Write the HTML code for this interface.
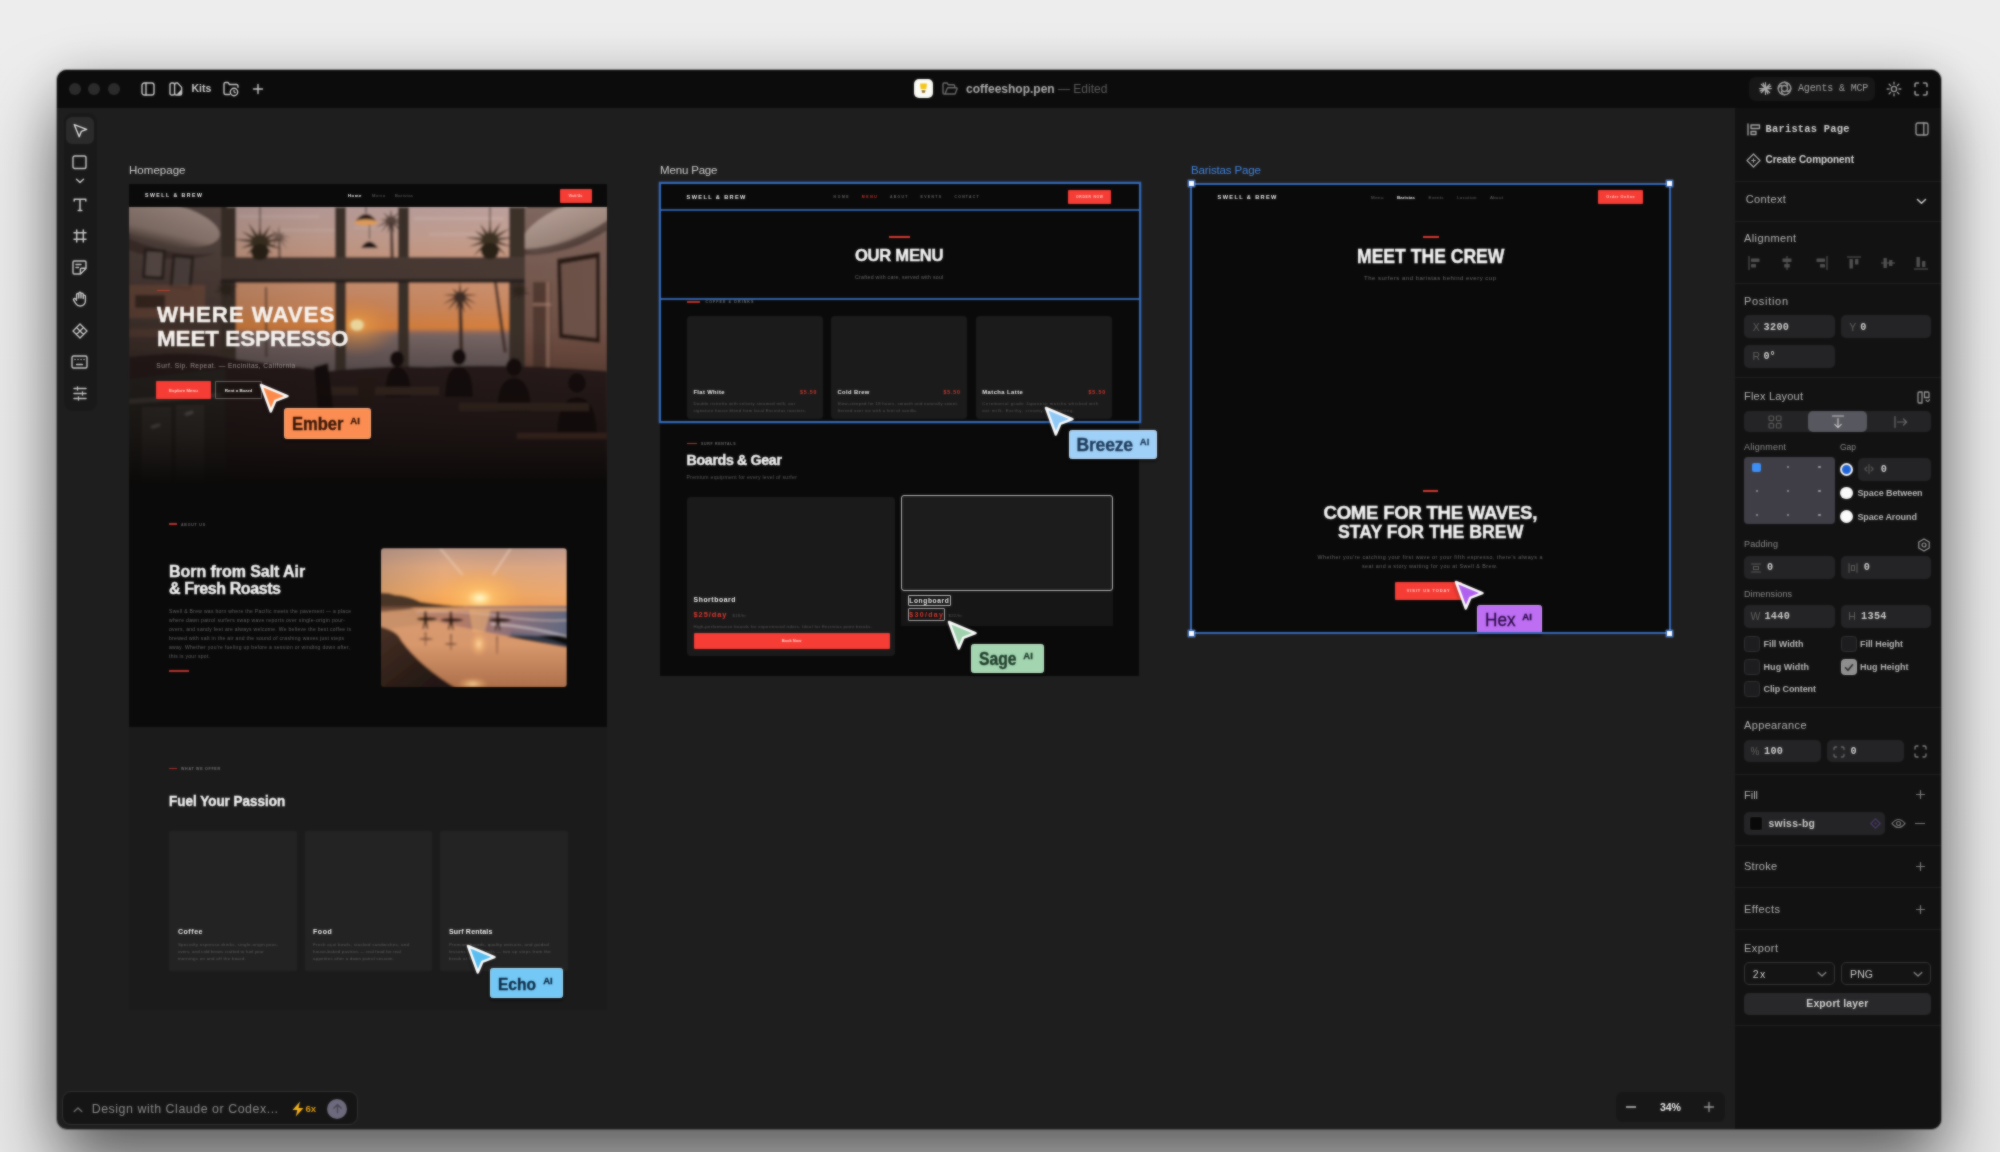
<!DOCTYPE html>
<html lang="en">
<head>
<meta charset="utf-8">
<title>coffeeshop.pen</title>
<style>
*{box-sizing:border-box;margin:0;padding:0}
html,body{width:2000px;height:1152px;overflow:hidden}
body{position:relative;font-family:"Liberation Sans",sans-serif;background:linear-gradient(180deg,#ededed 0%,#ebebeb 40%,#e8e8e8 100%);color:#ddd}
#all{position:absolute;left:0;top:0;width:2000px;height:1152px;filter:url(#soft)}
.a{position:absolute}
.t{position:absolute;white-space:nowrap;line-height:1}
.b{font-weight:bold}
.mono{font-family:"Liberation Mono",monospace}
svg{position:absolute;overflow:visible}
.ic{fill:none;stroke:#c9c9c9;stroke-width:1.4;stroke-linecap:round;stroke-linejoin:round}
#win{left:57px;top:70px;width:1884px;height:1059px;border-radius:10px;background:#1e1e1e;box-shadow:0 42px 70px rgba(0,0,0,.55),0 0 50px rgba(0,0,0,.15),0 0 0 1px rgba(0,0,0,.3);overflow:hidden}
#tb{left:0;top:0;width:1884px;height:37.500px;background:#0c0c0c}
#rp{left:1677.500px;top:37.500px;width:207px;height:1023px;background:#121212}
.sep{position:absolute;left:1734px;width:207px;height:1px;background:#1f1f1f}
.inp{position:absolute;height:23px;border-radius:5px;background:#242426}
.lbl{position:absolute;white-space:nowrap;line-height:1;font-size:11px;color:#b9b9b9}
.cb{position:absolute;width:15px;height:15px;border-radius:3px;background:#1c1c1e;border:1px solid #333}
</style>
</head>
<body>
<svg width="0" height="0" style="position:absolute"><defs><filter id="soft" x="0" y="0" width="100%" height="100%" color-interpolation-filters="sRGB"><feGaussianBlur in="SourceGraphic" stdDeviation="0.9" result="b"/><feComposite in="SourceGraphic" in2="b" operator="arithmetic" k1="0" k2="0.4" k3="0.6" k4="0"/></filter></defs></svg>
<div id="all">
<!-- window -->
<div class="a" id="win">
  <div class="a" id="tb"></div>
  <div class="a" id="rp"></div>
</div>

<!-- TITLEBAR -->
<div id="titlebar">
  <div class="a" style="left:69px;top:83px;width:12px;height:12px;border-radius:50%;background:#2b2b2b"></div>
  <div class="a" style="left:88px;top:83px;width:12px;height:12px;border-radius:50%;background:#2b2b2b"></div>
  <div class="a" style="left:108px;top:83px;width:12px;height:12px;border-radius:50%;background:#2b2b2b"></div>
  <!-- sidebar icon -->
  <svg style="left:141px;top:82px" width="14" height="14" viewBox="0 0 14 14"><rect class="ic" x="1" y="1" width="12" height="12" rx="2.2"/><path class="ic" d="M5 1v12"/></svg>
  <!-- files icon -->
  <svg style="left:169px;top:82px" width="14" height="14" viewBox="0 0 14 14"><rect class="ic" x="1" y="1" width="4.600" height="12" rx="1.600"/><path class="ic" d="M5.600 2.600A1.600 1.600 0 0 1 7.200 1H8.600L12.600 5.400V11.400A1.600 1.600 0 0 1 11 13H7.200A1.600 1.600 0 0 1 5.600 11.400"/><path d="M12.300 7.600V11.300A1.400 1.400 0 0 1 10.900 12.700H7.400Z" fill="#c9c9c9"/></svg>
  <div class="t b" style="left:191.500px;top:83px;font-size:10.500px;color:#cfcfcf">Kits</div>
  <!-- folder clock -->
  <svg style="left:223px;top:81px" width="17" height="16" viewBox="0 0 17 16"><path class="ic" d="M6.500 13.500H2.400A1.400 1.400 0 0 1 1 12.100V2.900A1.400 1.400 0 0 1 2.400 1.500H5L6.500 3.500H13.600A1.400 1.400 0 0 1 15 4.900V6.200"/><circle class="ic" cx="11" cy="11" r="3.700"/><path class="ic" style="stroke-width:1.200" d="M11 9.400V11L12.200 11.600"/></svg>
  <svg style="left:253px;top:84px" width="10" height="10" viewBox="0 0 10 10"><path class="ic" d="M5 .500v9M.500 5h9"/></svg>
  <!-- center -->
  <div class="a" style="left:914px;top:79px;width:19px;height:19px;border-radius:5px;background:#fbfbf6"></div>
  <svg style="left:917px;top:82px" width="13" height="13" viewBox="0 0 13 13"><path d="M3 1.500h7l-.7 5.500h-5.600z" fill="#f5c518"/><path d="M4.500 8.200h4l-.6 2.600h-2.800z" fill="#8a6a1a"/></svg>
  <svg style="left:942px;top:82px" width="16" height="13" viewBox="0 0 16 13"><path class="ic" style="stroke:#6c6c6c" d="M3 12L5.200 6.400A1.200 1.200 0 0 1 6.300 5.700H14.200A.9.900 0 0 1 15 7L13.400 11.200A1.200 1.200 0 0 1 12.300 12H2.200A1.200 1.200 0 0 1 1 10.800V2.200A1.200 1.200 0 0 1 2.200 1H5L6.400 2.800H11.500A1.200 1.200 0 0 1 12.700 4V5.500"/></svg>
  <div class="t" style="left:966px;top:83px;font-size:12px;color:#adadad"><span class="b">coffeeshop.pen</span><span style="color:#5e5e5e"> — Edited</span></div>
  <!-- right -->
  <div class="a" style="left:1749px;top:77px;width:126px;height:24px;border-radius:7px;background:#171717"></div>
  <svg style="left:1759px;top:82px" width="13" height="13" viewBox="0 0 13 13"><g stroke="#a8a8a8" stroke-width="1.250" stroke-linecap="round"><path d="M6.500 .600v11.800M.600 6.500h11.800M2.300 2.300l8.400 8.400M10.700 2.300l-8.400 8.400M4.100 1.200l4.800 10.600M1.200 8.900l10.600-4.800"/></g></svg>
  <svg style="left:1777px;top:81px" width="15" height="15" viewBox="0 0 15 15"><circle class="ic" style="stroke:#9a9a9a" cx="7.500" cy="7.500" r="6.300"/><circle class="ic" style="stroke:#9a9a9a" cx="7.500" cy="7.500" r="3"/><path class="ic" style="stroke:#9a9a9a" d="M7.500 1.200a4 4 0 0 1 3 3.300M13.800 7.500a4 4 0 0 1-3.300 3M7.500 13.800a4 4 0 0 1-3-3.300M1.200 7.500a4 4 0 0 1 3.300-3"/></svg>
  <div class="t mono" style="left:1798px;top:83.500px;font-size:10px;color:#a2a2a2;letter-spacing:-.15px">Agents &amp; MCP</div>
  <svg style="left:1886px;top:81px" width="16" height="16" viewBox="0 0 16 16"><circle class="ic" style="stroke:#9c9c9c" cx="8" cy="8" r="2.600"/><path class="ic" style="stroke:#9c9c9c" d="M8 1.200v1.800M8 13v1.800M1.200 8h1.800M13 8h1.800M3.200 3.200l1.300 1.300M11.500 11.500l1.300 1.300M3.200 12.800l1.300-1.300M11.500 4.500l1.300-1.300"/></svg>
  <svg style="left:1914px;top:82px" width="14" height="14" viewBox="0 0 14 14"><path class="ic" style="stroke-width:1.600;stroke:#9c9c9c" d="M1 4.500V2.500A1.500 1.500 0 0 1 2.500 1H4.500M9.500 1H11.500A1.500 1.500 0 0 1 13 2.500V4.500M13 9.500V11.500A1.500 1.500 0 0 1 11.500 13H9.500M4.500 13H2.500A1.500 1.500 0 0 1 1 11.500V9.500"/></svg>
</div>

<!-- TOOLBAR -->
<div id="toolbar">
  <div class="a" style="left:64px;top:113px;width:33px;height:298px;border-radius:9px;background:#191919"></div>
  <div class="a" style="left:66px;top:117px;width:28px;height:27px;border-radius:6px;background:#2b2b2b"></div>
  <!-- cursor -->
  <svg style="left:73px;top:123px" width="15" height="15" viewBox="0 0 15 15"><path class="ic" style="stroke:#e0e0e0" d="M1.200 1.600L13.600 6.400L8.300 8.400L6.200 13.800Z"/></svg>
  <!-- square -->
  <svg style="left:72px;top:155px" width="15" height="15" viewBox="0 0 15 15"><rect class="ic" x="1" y="1" width="13" height="12.500" rx="1.800"/></svg>
  <svg style="left:75px;top:178px" width="10" height="6" viewBox="0 0 10 6"><path class="ic" d="M1.500 1.200L5 4.500L8.500 1.200"/></svg>
  <!-- T -->
  <svg style="left:73px;top:198px" width="14" height="14" viewBox="0 0 14 14"><path class="ic" style="stroke-width:1.500" d="M1.200 3V1.200H12.800V3M7 1.200V12.600M5.200 12.600H8.800"/></svg>
  <!-- frame -->
  <svg style="left:73px;top:229px" width="14" height="14" viewBox="0 0 14 14"><path class="ic" style="stroke-width:1.500" d="M3.700 1V13M10.300 1V13M1 3.700H13M1 10.300H13"/></svg>
  <!-- note -->
  <svg style="left:72px;top:260px" width="15" height="15" viewBox="0 0 15 15"><path class="ic" d="M2.200 1H12.800A1.200 1.200 0 0 1 14 2.200V8.500L8.500 14H2.200A1.200 1.200 0 0 1 1 12.800V2.200A1.200 1.200 0 0 1 2.200 1ZM14 8.300H9.600A1.200 1.200 0 0 0 8.400 9.500V14M4 4.500H9M4 7.500H6.500"/></svg>
  <!-- hand -->
  <svg style="left:72px;top:291px" width="16" height="16" viewBox="0 0 16 16"><path class="ic" d="M4.600 8V3.600a1.100 1.100 0 0 1 2.200 0V7M6.800 6.800V2.400a1.100 1.100 0 0 1 2.200 0V7M9 6.800V3.200a1.100 1.100 0 0 1 2.200 0V7.500M11.200 7.500V5.200a1.100 1.100 0 0 1 2.200 0V10a5 5 0 0 1-5 5H8a5 5 0 0 1-4.200-2.300L1.600 9.200a1.200 1.200 0 0 1 2-1.300L4.600 9.200"/></svg>
  <!-- component -->
  <svg style="left:72px;top:323px" width="16" height="16" viewBox="0 0 16 16"><path class="ic" d="M8 1L11.500 4.500L8 8L4.500 4.500ZM4.500 4.500L8 8L4.500 11.500L1 8ZM11.500 4.500L15 8L11.500 11.500L8 8ZM8 8L11.500 11.500L8 15L4.500 11.500Z"/></svg>
  <!-- keyboard -->
  <svg style="left:71px;top:355px" width="17" height="14" viewBox="0 0 17 14"><rect class="ic" x="1" y="1" width="15" height="12" rx="1.500"/><path class="ic" d="M4 4.500h.1M7 4.500h.1M10 4.500h.1M13 4.500h.1M5.500 9.500h6"/></svg>
  <!-- sliders -->
  <svg style="left:73px;top:386px" width="14" height="15" viewBox="0 0 14 15"><path class="ic" style="stroke-width:1.500" d="M1 2.500H3M6 2.500H13M1 7.500H8M11 7.500H13M1 12.500H4M7 12.500H13M4.500 1V4M9.500 6V9M5.500 11V14"/></svg>
</div>

<!-- CANVAS -->
<div id="canvas">
<!-- Homepage frame -->
<div class="t" style="left:129.00px;top:165px;font-size:11.5px;color:#cfcfcf;letter-spacing:0.034px;">Homepage</div>
<div class="a" style="left:129.00px;top:184.00px;width:478.00px;height:542.50px;background:#0a0a0a;"></div>
<div class="a" style="left:129.00px;top:726.50px;width:478.00px;height:283.50px;background:#1b1b1b;"></div>
<svg style="left:129px;top:207px" width="478" height="276" viewBox="0 0 478 276">
<defs>
<linearGradient id="sky" x1="0" y1="0" x2="0" y2="1"><stop offset="0" stop-color="#bfa4a2"/><stop offset=".12" stop-color="#c9a394"/><stop offset=".26" stop-color="#d39878"/><stop offset=".36" stop-color="#d28d62"/><stop offset=".44" stop-color="#e0853f"/><stop offset=".455" stop-color="#9a7060"/><stop offset=".47" stop-color="#7c6a68"/><stop offset=".58" stop-color="#6a5c5c"/><stop offset="1" stop-color="#3a2c28"/></linearGradient>
<radialGradient id="sun" cx=".5" cy=".5" r=".5"><stop offset="0" stop-color="#ffd27a" stop-opacity=".95"/><stop offset=".25" stop-color="#f7a24a" stop-opacity=".7"/><stop offset="1" stop-color="#e0813f" stop-opacity="0"/></radialGradient>
<linearGradient id="lw" x1="0" y1="0" x2="0" y2="1"><stop offset="0" stop-color="#62504b"/><stop offset=".5" stop-color="#45352f"/><stop offset="1" stop-color="#1f1715"/></linearGradient>
<linearGradient id="rw" x1="0" y1="0" x2="0" y2="1"><stop offset="0" stop-color="#806860"/><stop offset=".55" stop-color="#6e4c40"/><stop offset="1" stop-color="#2a1e1b"/></linearGradient>
<linearGradient id="fade" x1="0" y1="0" x2="0" y2="1"><stop offset="0" stop-color="#0b0908" stop-opacity="0"/><stop offset=".45" stop-color="#0b0908" stop-opacity=".02"/><stop offset=".65" stop-color="#0b0908" stop-opacity=".2"/><stop offset=".82" stop-color="#0b0908" stop-opacity=".46"/><stop offset=".93" stop-color="#0b0908" stop-opacity=".75"/><stop offset="1" stop-color="#0a0908" stop-opacity=".96"/></linearGradient>
<linearGradient id="fadel" x1="0" y1="0" x2="1" y2="0"><stop offset="0" stop-color="#0b0908" stop-opacity=".25"/><stop offset=".4" stop-color="#0b0908" stop-opacity=".08"/><stop offset="1" stop-color="#0b0908" stop-opacity="0"/></linearGradient>
<linearGradient id="brd" x1="0" y1="0" x2="0" y2="1"><stop offset="0" stop-color="#b39d94"/><stop offset=".7" stop-color="#9c867c"/><stop offset="1" stop-color="#5a4842"/></linearGradient>
<filter id="bl" x="-5%" y="-5%" width="110%" height="110%"><feGaussianBlur stdDeviation="1.300"/></filter>
<clipPath id="hc"><rect x="0" y="0" width="478" height="276"/></clipPath>
</defs>
<g clip-path="url(#hc)">
<rect width="478" height="276" fill="#3a2c28"/>
<g filter="url(#bl)">
<!-- sky through window -->
<rect x="98" y="-4" width="300" height="284" fill="url(#sky)"/>
<path d="M110 8h80v3h-80zM150 22h60v2.500h-60zM285 10h90v3h-90zM300 26h60v2.500h-60zM225 20h40v2h-40z" fill="#d8c0bc" opacity=".35"/>
<ellipse cx="228" cy="118" rx="44" ry="32" fill="url(#sun)"/>
<ellipse cx="228" cy="118" rx="6.500" ry="5.500" fill="#ffe9a8"/>
<!-- palms -->
<g fill="#3f2d27">
<path d="M331.0 75.3L332.4 85.6L340.2 79.9L334.9 87.0L348.4 88.0L336.0 89.3L347.2 96.9L335.6 91.9L343.6 103.5L333.8 93.9L335.8 106.2L331.0 94.6L326.9 103.9L328.2 93.9L318.4 103.5L326.4 91.9L313.8 97.3L326.0 89.3L314.3 88.1L327.1 87.0L323.3 81.5L329.6 85.6Z"/><path d="M329.500 92h3.400l1.600 60h-4z"/>
<path d="M365 76l3-.5l10 70h-3.500z" opacity=".85"/>
<path d="M262.0 2.0L263.3 10.1L270.4 5.0L265.4 11.3L276.2 12.9L266.5 13.4L278.3 21.5L266.1 15.7L271.8 24.9L264.4 17.4L265.7 26.6L262.0 18.1L258.4 26.2L259.6 17.4L252.0 25.1L257.9 15.7L246.3 21.3L257.5 13.4L250.5 13.1L258.6 11.3L254.0 5.5L260.7 10.1Z" opacity=".8"/><path d="M260.800 16h3l1.200 34h-3.600z" opacity=".8"/>
<path d="M150.0 17.7L151.1 26.9L155.7 24.9L152.9 28.1L162.1 30.5L153.6 30.0L159.8 36.1L152.9 31.9L158.1 42.7L151.1 33.1L150.0 38.7L148.9 33.1L142.2 42.3L147.1 31.9L138.1 37.4L146.4 30.0L137.4 30.5L147.1 28.1L141.9 22.7L148.9 26.9Z" opacity=".55"/><path d="M149 32h2.400l.6 20h-3z" opacity=".55"/>
<path d="M136 80h2l.5 70h-2.500z" opacity=".7"/>
</g>
<!-- left wall -->
<path d="M0 0H104V276H0z" fill="url(#lw)"/>
<ellipse cx="34" cy="16" rx="58" ry="21" fill="url(#brd)" transform="rotate(13 34 16)"/>
<path d="M-4 30q50 22 92 16q-44 14-92-4z" fill="#3a2a26" opacity=".7"/>
<rect x="14" y="42" width="22" height="30" fill="#2a211f" transform="rotate(4 25 57)"/><rect x="17" y="45" width="16" height="24" fill="#665651" transform="rotate(4 25 57)"/>
<rect x="42" y="48" width="22" height="34" fill="#2a211f" transform="rotate(5 53 64)"/><rect x="45" y="51" width="16" height="28" fill="#574944" transform="rotate(5 53 64)"/>
<rect x="0" y="78" width="76" height="26" fill="#7a5240" opacity=".7"/><rect x="0" y="102" width="70" height="9" fill="#6a4a3a"/><rect x="0" y="122" width="62" height="8" fill="#5a4034"/><rect x="6" y="88" width="30" height="13" fill="#35261f" opacity=".85"/>
<!-- right wall -->
<path d="M392 0H478V276H392z" fill="url(#rw)"/>
<ellipse cx="444" cy="18" rx="54" ry="21" fill="url(#brd)" transform="rotate(-22 444 18)"/>
<path d="M396 42q46-2 84-30v10q-40 26-84 26z" fill="#4a3832" opacity=".7"/>
<path d="M428 52L471 45V136L430 131z" fill="#2a1c18"/><path d="M432 57L467 51V131L434 127z" fill="#6e5249"/>
<rect x="404" y="75" width="18" height="200" fill="#4a342c" opacity=".8"/><rect x="417" y="75" width="4" height="120" fill="#b08472" opacity=".6"/><rect x="404" y="96" width="18" height="3" fill="#b08472" opacity=".6"/>
<!-- mullions -->
<g fill="#3e302c">
<rect x="92" y="0" width="15" height="276"/><rect x="206" y="0" width="11" height="276"/><rect x="269" y="0" width="11" height="276"/><rect x="380" y="0" width="16" height="276"/>
<rect x="92" y="50" width="304" height="25" fill="#4c3b35"/>
<rect x="92" y="72" width="304" height="4" fill="#2c2220"/>
</g>
<!-- hanging plants -->
<g fill="#3e3122"><path d="M131.0 17.7L132.9 28.4L141.6 17.9L136.3 29.9L148.6 24.7L138.5 32.6L154.1 32.6L139.0 35.8L152.9 42.1L137.6 38.9L143.6 47.0L134.7 41.1L135.4 50.3L131.0 41.8L125.0 55.7L127.3 41.1L117.4 48.0L124.4 38.9L112.0 41.1L123.0 35.8L104.8 32.3L123.5 32.6L112.7 24.3L125.7 29.9L119.3 16.1L129.1 28.4Z"/><ellipse cx="131" cy="45" rx="9" ry="8" fill="#2a2016"/><rect x="130.500" y="0" width="1" height="20" fill="#3a2c28"/><path d="M361.0 14.0L362.8 26.6L371.8 15.5L366.1 28.1L380.5 21.5L368.2 30.7L385.7 30.5L368.6 33.8L382.8 40.0L367.3 36.7L377.4 48.7L364.6 38.8L365.3 47.7L361.0 39.5L355.9 50.5L357.4 38.8L344.5 48.8L354.7 36.7L339.9 39.8L353.4 33.8L336.6 30.5L353.8 30.7L345.8 24.1L355.9 28.1L351.1 17.0L359.2 26.6Z"/><ellipse cx="361" cy="44" rx="9" ry="8" fill="#2a2016"/><rect x="360.500" y="0" width="1" height="18" fill="#3a2c28"/><path d="M97.0 71.9L98.4 78.3L103.5 74.4L100.7 79.7L109.7 78.5L101.5 82.0L107.2 84.8L100.7 84.3L104.5 90.8L98.4 85.7L97.0 92.3L95.6 85.7L90.7 89.3L93.3 84.3L84.9 85.3L92.5 82.0L86.9 79.2L93.3 79.7L89.7 73.5L95.6 78.3Z" fill="#2e251b"/><path d="M390.0 75.0L391.2 80.9L396.0 77.0L393.1 82.1L398.9 81.5L393.9 84.0L401.5 87.2L393.1 85.9L395.2 90.1L391.2 87.1L390.0 93.1L388.8 87.1L382.8 92.4L386.9 85.9L381.3 86.4L386.1 84.0L379.6 81.1L386.9 82.1L383.4 76.3L388.8 80.9Z" fill="#2e251b"/></g>
<!-- lamps -->
<path d="M226 15q11-16 22 0z" fill="#2a1c18"/><ellipse cx="237" cy="15.500" rx="12" ry="3.200" fill="#eba562"/><rect x="236.500" y="0" width="1" height="6" fill="#222"/>
<path d="M232 41q8-13 17 0z" fill="#1e1614"/><rect x="240" y="18" width="1" height="14" fill="#222"/>
<!-- interior dark lower half -->
<path d="M0 150Q60 142 104 152L200 164Q260 158 300 160Q380 156 478 164V276H0z" fill="#2a1f1b"/>
<g fill="#17110f">
<ellipse cx="268" cy="152" rx="7" ry="8"/><path d="M256 190q0-30 12-30q14 0 14 30z"/>
<ellipse cx="330" cy="150" rx="7" ry="8"/><path d="M316 190q0-30 14-30q14 0 14 30z"/>
<ellipse cx="385" cy="160" rx="8" ry="9"/><path d="M368 205q0-34 17-34q17 0 17 34z"/>
<ellipse cx="448" cy="176" rx="9" ry="10"/><path d="M428 230q0-40 20-40q20 0 20 40z"/>
<rect x="200" y="180" width="110" height="8" fill="#3a2a24"/><rect x="330" y="196" width="130" height="8" fill="#3a2a24"/>
<path d="M185 160l14-4l6 50l-16 2z"/><path d="M228 168l20 0l-4 30l-14 0z" fill="#2a1a14"/>
</g>
<path d="M0 172L96 162V276H0z" fill="#2c2624"/>
<path d="M0 192L92 186V190L0 197z" fill="#4a423e"/>
<rect x="13" y="200" width="29" height="76" fill="#3a3532"/><rect x="47" y="198" width="28" height="78" fill="#3a3532"/>
<rect x="22" y="218" width="9" height="2.500" fill="#7a7470" transform="rotate(-18 26 219)"/><rect x="56" y="205" width="8" height="2.500" fill="#7a7470" transform="rotate(-18 60 206)"/>
<rect x="388" y="226" width="90" height="6" fill="#55362a"/>
</g>
<rect width="478" height="276" fill="url(#fade)"/>
<rect width="478" height="276" fill="url(#fadel)"/>
</g>
</svg>
<div class="t" style="left:145.00px;top:193px;font-size:5.2px;color:#f2f2f2;font-weight:bold;letter-spacing:1.488px;">SWELL &amp; BREW</div>
<div class="t" style="left:348.00px;top:194px;font-size:4.2px;color:#fff;font-weight:bold;letter-spacing:0.577px;">Home</div>
<div class="t" style="left:372.00px;top:194px;font-size:4.2px;color:#6d6d6d;letter-spacing:0.831px;">Menu</div>
<div class="t" style="left:395.00px;top:194px;font-size:4.2px;color:#6d6d6d;letter-spacing:0.404px;">Baristas</div>
<div class="a" style="left:559.50px;top:189.40px;width:32.00px;height:13.50px;background:#f53d35;border-radius:1px;"></div>
<div class="t" style="left:568.57px;top:195px;font-size:3.8px;color:#ffd0cc;font-weight:bold;">Visit Us</div>
<div class="a" style="left:156.50px;top:289.50px;width:13.00px;height:1.30px;background:#c8402f;border-radius:0px;opacity:.8;"></div>
<div class="t" style="left:156.90px;top:304px;font-size:22.4px;color:#f6f2ee;font-weight:bold;letter-spacing:0.865px;-webkit-text-stroke:.4px;">WHERE WAVES</div>
<div class="t" style="left:156.90px;top:328px;font-size:22.4px;color:#f6f2ee;font-weight:bold;letter-spacing:-0.017px;-webkit-text-stroke:.4px;">MEET ESPRESSO</div>
<div class="t" style="left:156.30px;top:363px;font-size:6.6px;color:#9a908c;letter-spacing:0.447px;">Surf. Sip. Repeat. — Encinitas, California</div>
<div class="a" style="left:155.60px;top:381.20px;width:55.80px;height:17.40px;background:#f53d35;border-radius:1px;"></div>
<div class="t" style="left:169.08px;top:389px;font-size:4.4px;color:#ffd5d0;font-weight:bold;">Explore Menu</div>
<div class="a" style="left:215.30px;top:381.20px;width:46.40px;height:17.40px;background:rgba(20,14,12,.35);border-radius:1px;border:1px solid rgba(255,255,255,.32);"></div>
<div class="t" style="left:224.81px;top:389px;font-size:4.4px;color:#f0f0f0;font-weight:bold;">Rent a Board</div>
<div class="a" style="left:169.00px;top:523.40px;width:8.00px;height:1.50px;background:#b8342c;"></div>
<div class="t" style="left:181.00px;top:524px;font-size:3.5px;color:#6a6a6a;font-weight:bold;letter-spacing:0.817px;">ABOUT US</div>
<div class="t" style="left:169.00px;top:564px;font-size:16px;color:#f4f4f4;font-weight:bold;letter-spacing:-0.059px;-webkit-text-stroke:.4px;">Born from Salt Air</div>
<div class="t" style="left:169.00px;top:581px;font-size:16px;color:#f4f4f4;font-weight:bold;letter-spacing:-0.413px;-webkit-text-stroke:.4px;">&amp; Fresh Roasts</div>
<div class="t" style="left:169.00px;top:609px;font-size:5px;color:#656565;letter-spacing:0.311px;">Swell &amp; Brew was born where the Pacific meets the pavement — a place</div>
<div class="t" style="left:169.00px;top:618px;font-size:5px;color:#656565;letter-spacing:0.341px;">where dawn patrol surfers swap wave reports over single-origin pour-</div>
<div class="t" style="left:169.00px;top:627px;font-size:5px;color:#656565;letter-spacing:0.304px;">overs, and sandy feet are always welcome. We believe the best coffee is</div>
<div class="t" style="left:169.00px;top:636px;font-size:5px;color:#656565;letter-spacing:0.313px;">brewed with salt in the air and the sound of crashing waves just steps</div>
<div class="t" style="left:169.00px;top:645px;font-size:5px;color:#656565;letter-spacing:0.314px;">away. Whether you're fueling up before a session or winding down after,</div>
<div class="t" style="left:169.00px;top:654px;font-size:5px;color:#656565;letter-spacing:0.287px;">this is your spot.</div>
<div class="a" style="left:169.00px;top:670.30px;width:20.40px;height:1.90px;background:#b8342c;"></div>
<svg style="left:381.400px;top:547.800px" width="185.700" height="139.100" viewBox="0 0 186 139">
<defs>
<linearGradient id="bsky" x1="0" y1="0" x2="0" y2="1"><stop offset="0" stop-color="#b4968c"/><stop offset=".35" stop-color="#e2aa80"/><stop offset=".75" stop-color="#f6ac62"/><stop offset="1" stop-color="#f59c48"/></linearGradient>
<linearGradient id="bskyh" x1="0" y1="0" x2="1" y2="0"><stop offset="0" stop-color="#8a7068" stop-opacity=".35"/><stop offset=".35" stop-color="#8a7068" stop-opacity="0"/><stop offset="1" stop-color="#d0a098" stop-opacity=".25"/></linearGradient>
<radialGradient id="bsun" cx=".5" cy=".5" r=".5"><stop offset="0" stop-color="#fff6d8"/><stop offset=".1" stop-color="#ffe6a0"/><stop offset=".3" stop-color="#ffc068" stop-opacity=".8"/><stop offset="1" stop-color="#f8a850" stop-opacity="0"/></radialGradient>
<linearGradient id="bsea" x1="0" y1="0" x2="1" y2="0"><stop offset="0" stop-color="#c08a68"/><stop offset=".45" stop-color="#b07a68"/><stop offset=".7" stop-color="#8a707a"/><stop offset="1" stop-color="#5f6880"/></linearGradient>
<linearGradient id="bwet" x1="0" y1="0" x2="0" y2="1"><stop offset="0" stop-color="#d89a72"/><stop offset=".4" stop-color="#d8986c"/><stop offset="1" stop-color="#a86c48"/></linearGradient>
<linearGradient id="bdark" x1="0" y1="0" x2="1" y2="1"><stop offset="0" stop-color="#4a3226"/><stop offset=".6" stop-color="#2a1c16"/><stop offset="1" stop-color="#1e1410"/></linearGradient>
<radialGradient id="brf" cx=".5" cy=".5" r=".5"><stop offset="0" stop-color="#ffd9a0" stop-opacity=".95"/><stop offset="1" stop-color="#f8a858" stop-opacity="0"/></radialGradient>
<clipPath id="bc"><rect width="186" height="139" rx="3"/></clipPath>
<filter id="bb" x="-5%" y="-5%" width="110%" height="110%"><feGaussianBlur stdDeviation=".9"/></filter>
</defs>
<g clip-path="url(#bc)"><g filter="url(#bb)">
<rect x="-4" y="-4" width="194" height="66" fill="url(#bsky)"/>
<rect x="-4" y="-4" width="194" height="66" fill="url(#bskyh)"/>
<path d="M59 0L82 27M130 0L112 27" stroke="#f6dcc8" stroke-width="1.300" opacity=".7" fill="none"/>
<ellipse cx="99" cy="50" rx="46" ry="30" fill="url(#bsun)"/>
<!-- sea -->
<rect x="-4" y="58" width="194" height="30" fill="url(#bsea)"/>
<path d="M25 60H190V63H40z" fill="#e8a868" opacity=".7"/>
<path d="M22 64Q80 62 120 68T190 72" stroke="#e8d0c0" stroke-width="1.200" fill="none" opacity=".6"/>
<path d="M110 76Q150 78 190 90" stroke="#e8dcd8" stroke-width="2.400" fill="none" opacity=".55"/>
<path d="M130 84Q160 86 190 98V104Q160 92 130 88z" fill="#4a5a74" opacity=".55"/>
<!-- wet sand -->
<path d="M-4 66Q20 64 40 70Q90 82 190 100V143H-4z" fill="url(#bwet)"/>
<path d="M-4 62L30 62Q40 66 60 74L-4 82z" fill="#c89068" opacity=".9"/>
<ellipse cx="98" cy="96" rx="9" ry="13" fill="url(#brf)"/>
<ellipse cx="92" cy="136" rx="16" ry="7" fill="url(#brf)" opacity=".85"/>
<path d="M88 62H110L104 84H92z" fill="#ffc078" opacity=".45"/>
<!-- headland -->
<path d="M-4 45Q6 44 14 47Q28 48 40 54Q60 57 84 59L-4 60z" fill="#4a3426"/>
<path d="M-4 58H40Q30 62 -4 64z" fill="#6a4632" opacity=".8"/>
<!-- dark sand -->
<path d="M-4 78Q16 82 20 92Q40 120 80 143H-4z" fill="url(#bdark)"/>
<!-- surfers -->
<g fill="#2c1710">
<ellipse cx="44.500" cy="64.500" rx="1.300" ry="1.500"/><path d="M43.300 66h2.400l.5 8l1 7h-1.400l-1.300-6l-1.700 6h-1.300l1.500-7z"/><ellipse cx="46" cy="71" rx="10" ry="1.700"/>
<ellipse cx="70" cy="65" rx="1.300" ry="1.500"/><path d="M68.800 66.500h2.400l.5 8l1 7h-1.400l-1.300-6l-1.700 6h-1.300l1.500-7z"/><ellipse cx="71" cy="72" rx="11" ry="1.700"/>
<ellipse cx="117" cy="65" rx="1.300" ry="1.500"/><path d="M115.800 66.500h2.400l.5 8l1 8h-1.400l-1.300-7l-1.700 7h-1.300l1.500-8z"/><ellipse cx="119" cy="72" rx="11" ry="1.800"/>
<g opacity=".55"><path d="M43.700 84h1.800l-.4 14h-1z"/><ellipse cx="45" cy="91" rx="7" ry="1.200"/><path d="M69.200 86h1.800l-.4 16h-1z"/><ellipse cx="70" cy="96" rx="6" ry="1.100"/><path d="M115.500 88h1.600l-.4 18h-.8z"/></g>
</g>
</g></g>
</svg>
<div class="a" style="left:169.00px;top:768.20px;width:8.00px;height:1.20px;background:#a82f28;"></div>
<div class="t" style="left:181.00px;top:768px;font-size:3.5px;color:#777;font-weight:bold;letter-spacing:0.777px;">WHAT WE OFFER</div>
<div class="t" style="left:169.00px;top:794px;font-size:14.4px;color:#f4f4f4;font-weight:bold;transform:scaleX(0.9356);transform-origin:0 0;-webkit-text-stroke:.4px;">Fuel Your Passion</div>
<div class="a" style="left:169.30px;top:831.20px;width:127.50px;height:139.50px;background:#232323;border-radius:2px;"></div>
<div class="t" style="left:177.90px;top:928px;font-size:7px;color:#f0f0f0;font-weight:bold;letter-spacing:0.564px;">Coffee</div>
<div class="t" style="left:177.90px;top:943px;font-size:4.4px;color:#5f5f5f;letter-spacing:0.277px;">Specialty espresso drinks, single-origin pour-</div>
<div class="t" style="left:177.90px;top:950px;font-size:4.4px;color:#5f5f5f;letter-spacing:0.135px;">overs, and cold brews crafted to fuel your</div>
<div class="t" style="left:177.90px;top:957px;font-size:4.4px;color:#5f5f5f;letter-spacing:0.281px;">mornings on and off the board.</div>
<div class="a" style="left:304.50px;top:831.20px;width:127.50px;height:139.50px;background:#232323;border-radius:2px;"></div>
<div class="t" style="left:313.10px;top:928px;font-size:7px;color:#f0f0f0;font-weight:bold;letter-spacing:0.499px;">Food</div>
<div class="t" style="left:313.10px;top:943px;font-size:4.4px;color:#5f5f5f;letter-spacing:0.278px;">Fresh açaí bowls, stacked sandwiches, and</div>
<div class="t" style="left:313.10px;top:950px;font-size:4.4px;color:#5f5f5f;letter-spacing:0.176px;">house-baked pastries — real food for real</div>
<div class="t" style="left:313.10px;top:957px;font-size:4.4px;color:#5f5f5f;letter-spacing:0.219px;">appetites after a dawn patrol session.</div>
<div class="a" style="left:440.30px;top:831.20px;width:127.50px;height:139.50px;background:#232323;border-radius:2px;"></div>
<div class="t" style="left:448.90px;top:928px;font-size:7px;color:#f0f0f0;font-weight:bold;letter-spacing:0.206px;">Surf Rentals</div>
<div class="t" style="left:448.90px;top:943px;font-size:4.4px;color:#5f5f5f;letter-spacing:0.261px;">Premium boards, quality wetsuits, and guided</div>
<div class="t" style="left:448.90px;top:950px;font-size:4.4px;color:#5f5f5f;letter-spacing:0.305px;">lessons for all levels — two up steps from the</div>
<div class="t" style="left:448.90px;top:957px;font-size:4.4px;color:#5f5f5f;letter-spacing:0.338px;">break at Swami's.</div>
<svg style="left:258.4px;top:382.2px;filter:drop-shadow(0 1px 2px rgba(0,0,0,.45))" width="32.5" height="32.5" viewBox="-3 -3 32.5 32.5"><path d="M0 0L26.5 11.1L14.3 15.9L9.8 26.5Z" fill="#fb8a4a" stroke="#fff" stroke-width="2.500" stroke-linejoin="round"/></svg>
<div class="a" style="left:284px;top:408px;width:86.5px;height:30.5px;background:#fb8d52;border:1.500px solid #ffad7c;border-radius:2.500px;box-shadow:0 1.500px 3px rgba(0,0,0,.55)"></div>
<div class="t" style="left:292.00px;top:415px;font-size:18px;color:#3a1606;font-weight:bold;transform:scaleX(0.9193);transform-origin:0 0;-webkit-text-stroke:.35px;">Ember</div>
<div class="t" style="left:350.30px;top:416px;font-size:9.5px;color:#3a1606;font-weight:bold;-webkit-text-stroke:.3px;">AI</div>
<svg style="left:464.9px;top:943.2px;filter:drop-shadow(0 1px 2px rgba(0,0,0,.45))" width="32.5" height="32.5" viewBox="-3 -3 32.5 32.5"><path d="M0 0L26.5 11.1L14.3 15.9L9.8 26.5Z" fill="#59bdf0" stroke="#fff" stroke-width="2.500" stroke-linejoin="round"/></svg>
<div class="a" style="left:490.4px;top:968.4px;width:73px;height:30px;background:#74c8f5;border:1.500px solid #a4e0fd;border-radius:2.500px;box-shadow:0 1.500px 3px rgba(0,0,0,.55)"></div>
<div class="t" style="left:498.40px;top:976px;font-size:17px;color:#0c2a45;font-weight:bold;transform:scaleX(0.9143);transform-origin:0 0;-webkit-text-stroke:.35px;">Echo</div>
<div class="t" style="left:543.20px;top:976px;font-size:9.5px;color:#0c2a45;font-weight:bold;-webkit-text-stroke:.3px;">AI</div>
<!-- Menu Page frame -->
<div class="t" style="left:660.00px;top:165px;font-size:11.5px;color:#cfcfcf;letter-spacing:-0.165px;">Menu Page</div>
<div class="a" style="left:660.00px;top:183.00px;width:479.00px;height:493.00px;background:#0a0a0a;"></div>
<div class="t" style="left:686.60px;top:195px;font-size:5.6px;color:#f2f2f2;font-weight:bold;letter-spacing:1.367px;">SWELL &amp; BREW</div>
<div class="t" style="left:833.60px;top:196px;font-size:3.4px;color:#6a6a6a;font-weight:bold;letter-spacing:1.600px;">HOME</div>
<div class="t" style="left:861.80px;top:196px;font-size:3.4px;color:#d8382f;font-weight:bold;letter-spacing:1.663px;">MENU</div>
<div class="t" style="left:890.00px;top:196px;font-size:3.4px;color:#6a6a6a;font-weight:bold;letter-spacing:1.328px;">ABOUT</div>
<div class="t" style="left:920.60px;top:196px;font-size:3.4px;color:#6a6a6a;font-weight:bold;letter-spacing:1.359px;">EVENTS</div>
<div class="t" style="left:954.50px;top:196px;font-size:3.4px;color:#6a6a6a;font-weight:bold;letter-spacing:1.272px;">CONTACT</div>
<div class="a" style="left:1067.60px;top:190.00px;width:43.80px;height:13.50px;background:#f53d35;border-radius:1px;"></div>
<div class="t" style="left:1076.00px;top:196px;font-size:3.3px;color:#ffc9c4;font-weight:bold;letter-spacing:0.763px;">ORDER NOW</div>
<div class="a" style="left:889.00px;top:236.30px;width:20.50px;height:1.50px;background:#d8382f;"></div>
<div class="t" style="left:855.00px;top:248px;font-size:16.6px;color:#f6f6f6;font-weight:bold;letter-spacing:-0.283px;-webkit-text-stroke:.4px;">OUR MENU</div>
<div class="t" style="left:855.00px;top:275px;font-size:5.2px;color:#6a6a6a;letter-spacing:0.262px;">Crafted with care, served with soul</div>
<div class="a" style="left:686.60px;top:301.30px;width:13.80px;height:1.40px;background:#b8322a;"></div>
<div class="t" style="left:705.50px;top:301px;font-size:3.6px;color:#6f6f6f;font-weight:bold;letter-spacing:1.071px;">COFFEE &amp; DRINKS</div>
<div class="a" style="left:686.60px;top:315.60px;width:136.80px;height:103.00px;background:#1b1b1b;border-radius:4px;"></div>
<div class="t" style="left:693.40px;top:390px;font-size:5.8px;color:#f0f0f0;font-weight:bold;letter-spacing:0.388px;">Flat White</div>
<div class="t" style="left:800.00px;top:390px;font-size:5.2px;color:#d8382f;font-weight:bold;letter-spacing:0.872px;">$5.50</div>
<div class="t" style="left:693.40px;top:402px;font-size:4.2px;color:#5c5c5c;letter-spacing:0.355px;">Double ristretto with velvety steamed milk, our</div>
<div class="t" style="left:693.40px;top:409px;font-size:4.2px;color:#5c5c5c;letter-spacing:0.325px;">signature house blend from local Encinitas roasters.</div>
<div class="a" style="left:830.60px;top:315.60px;width:136.80px;height:103.00px;background:#1b1b1b;border-radius:4px;"></div>
<div class="t" style="left:837.40px;top:390px;font-size:5.8px;color:#f0f0f0;font-weight:bold;letter-spacing:0.415px;">Cold Brew</div>
<div class="t" style="left:943.40px;top:390px;font-size:5.2px;color:#d8382f;font-weight:bold;letter-spacing:0.872px;">$5.50</div>
<div class="t" style="left:837.40px;top:402px;font-size:4.2px;color:#5c5c5c;letter-spacing:0.327px;">Slow-steeped for 18 hours, smooth and naturally sweet.</div>
<div class="t" style="left:837.40px;top:409px;font-size:4.2px;color:#5c5c5c;letter-spacing:0.311px;">Served over ice with a hint of vanilla.</div>
<div class="a" style="left:975.50px;top:315.60px;width:136.80px;height:103.00px;background:#1b1b1b;border-radius:4px;"></div>
<div class="t" style="left:982.30px;top:390px;font-size:5.8px;color:#f0f0f0;font-weight:bold;letter-spacing:0.459px;">Matcha Latte</div>
<div class="t" style="left:1088.60px;top:390px;font-size:5.2px;color:#d8382f;font-weight:bold;letter-spacing:0.872px;">$5.50</div>
<div class="t" style="left:982.30px;top:402px;font-size:4.2px;color:#5c5c5c;letter-spacing:0.530px;">Ceremonial grade Japanese matcha whisked with</div>
<div class="t" style="left:982.30px;top:409px;font-size:4.2px;color:#5c5c5c;letter-spacing:0.680px;">oat milk. Earthy, creamy, comforting.</div>
<div class="a" style="left:658.500px;top:181.500px;width:482px;height:241px;border:2px solid #3569b8;box-shadow:0 0 2px rgba(63,127,214,.6)"></div>
<div class="a" style="left:660.00px;top:209.30px;width:479.00px;height:1.60px;background:#3569b8;opacity:.85;"></div>
<div class="a" style="left:660.00px;top:298.40px;width:479.00px;height:1.60px;background:#3569b8;opacity:.9;"></div>
<div class="a" style="left:686.60px;top:443.20px;width:10.80px;height:1.30px;background:#b8322a;"></div>
<div class="t" style="left:701.00px;top:443px;font-size:3.5px;color:#6f6f6f;font-weight:bold;letter-spacing:0.703px;">SURF RENTALS</div>
<div class="t" style="left:686.60px;top:453px;font-size:14.2px;color:#f4f4f4;font-weight:bold;letter-spacing:-0.336px;-webkit-text-stroke:.4px;">Boards &amp; Gear</div>
<div class="t" style="left:686.60px;top:475px;font-size:5.1px;color:#5f5f5f;letter-spacing:0.273px;">Premium equipment for every level of surfer</div>
<div class="a" style="left:686.60px;top:496.50px;width:208.00px;height:159.00px;background:#1a1a1a;border-radius:4px;"></div>
<div class="t" style="left:693.50px;top:597px;font-size:6.8px;color:#f0f0f0;font-weight:bold;letter-spacing:0.595px;">Shortboard</div>
<div class="t" style="left:693.50px;top:611px;font-size:7.4px;color:#e03a30;font-weight:bold;letter-spacing:0.974px;">$25/day</div>
<div class="t" style="left:732.50px;top:614px;font-size:4.2px;color:#555;letter-spacing:0.318px;">$18/hr</div>
<div class="t" style="left:693.50px;top:625px;font-size:4.3px;color:#5a5a5a;letter-spacing:0.307px;">High-performance boards for experienced riders. Ideal for Encinitas point breaks.</div>
<div class="a" style="left:693.50px;top:633.00px;width:196.00px;height:15.60px;background:#f53d35;border-radius:1px;"></div>
<div class="t" style="left:781.72px;top:639px;font-size:4px;color:#ffd5d0;font-weight:bold;">Book Now</div>
<div class="a" style="left:901.00px;top:590.00px;width:212.00px;height:35.50px;background:#161616;"></div>
<div class="a" style="left:901px;top:494.500px;width:212px;height:96px;background:#1c1c1c;border:1.500px solid #b9b9b9;border-radius:3px"></div>
<div class="a" style="left:907.500px;top:594.600px;width:43px;height:11.600px;border:1px solid #bdbdbd;border-radius:1px"></div>
<div class="t" style="left:909.30px;top:598px;font-size:6.6px;color:#f0f0f0;font-weight:bold;letter-spacing:0.630px;">Longboard</div>
<div class="a" style="left:907.500px;top:608.200px;width:37px;height:12.400px;border:1px solid #a9a9a9;border-radius:1px"></div>
<div class="t" style="left:909.30px;top:611px;font-size:7px;color:#d8382f;font-weight:bold;letter-spacing:1.302px;">$30/day</div>
<div class="t" style="left:948.50px;top:614px;font-size:4.2px;color:#555;letter-spacing:0.318px;">$22/hr</div>
<svg style="left:1042.8px;top:404.8px;filter:drop-shadow(0 1px 2px rgba(0,0,0,.45))" width="32.5" height="32.5" viewBox="-3 -3 32.5 32.5"><path d="M0 0L26.5 11.1L14.3 15.9L9.8 26.5Z" fill="#8fc8f5" stroke="#fff" stroke-width="2.500" stroke-linejoin="round"/></svg>
<div class="a" style="left:1068.5px;top:429.6px;width:88.5px;height:29.5px;background:#9fd0f7;border:1.500px solid #c4e4ff;border-radius:2.500px;box-shadow:0 1.500px 3px rgba(0,0,0,.55)"></div>
<div class="t" style="left:1076.50px;top:437px;font-size:17.5px;color:#1c3958;font-weight:bold;letter-spacing:-0.179px;-webkit-text-stroke:.35px;">Breeze</div>
<div class="t" style="left:1139.80px;top:437px;font-size:9.5px;color:#1c3958;font-weight:bold;-webkit-text-stroke:.3px;">AI</div>
<svg style="left:945.9px;top:619.0px;filter:drop-shadow(0 1px 2px rgba(0,0,0,.45))" width="32.5" height="32.5" viewBox="-3 -3 32.5 32.5"><path d="M0 0L26.5 11.1L14.3 15.9L9.8 26.5Z" fill="#9fd1ac" stroke="#fff" stroke-width="2.500" stroke-linejoin="round"/></svg>
<div class="a" style="left:971px;top:643.5px;width:72.5px;height:29.5px;background:#a3d5b0;border:1.500px solid #c2ebcc;border-radius:2.500px;box-shadow:0 1.500px 3px rgba(0,0,0,.55)"></div>
<div class="t" style="left:979.00px;top:651px;font-size:17.5px;color:#1d3a28;font-weight:bold;transform:scaleX(0.8965);transform-origin:0 0;-webkit-text-stroke:.35px;">Sage</div>
<div class="t" style="left:1023.30px;top:651px;font-size:9.5px;color:#1d3a28;font-weight:bold;-webkit-text-stroke:.3px;">AI</div>
<!-- Baristas Page frame -->
<div class="t" style="left:1191.00px;top:165px;font-size:11.5px;color:#4285e0;letter-spacing:-0.133px;">Baristas Page</div>
<div class="a" style="left:1191.50px;top:183.50px;width:478.00px;height:449.50px;background:#0a0a0a;"></div>
<div class="t" style="left:1217.60px;top:195px;font-size:5.6px;color:#f2f2f2;font-weight:bold;letter-spacing:1.367px;">SWELL &amp; BREW</div>
<div class="t" style="left:1371.00px;top:196px;font-size:4.4px;color:#6a6a6a;letter-spacing:0.498px;">Menu</div>
<div class="t" style="left:1397.00px;top:196px;font-size:4.4px;color:#f0f0f0;font-weight:bold;letter-spacing:0.091px;">Baristas</div>
<div class="t" style="left:1428.50px;top:196px;font-size:4.4px;color:#6a6a6a;letter-spacing:0.310px;">Events</div>
<div class="t" style="left:1457.00px;top:196px;font-size:4.4px;color:#6a6a6a;letter-spacing:0.409px;">Location</div>
<div class="t" style="left:1490.00px;top:196px;font-size:4.4px;color:#6a6a6a;letter-spacing:0.375px;">About</div>
<div class="a" style="left:1598.00px;top:190.00px;width:45.00px;height:13.50px;background:#f53d35;border-radius:1px;"></div>
<div class="t" style="left:1606.25px;top:196px;font-size:3.8px;color:#ffc9c4;font-weight:bold;letter-spacing:0.479px;">Order Online</div>
<div class="a" style="left:1422.50px;top:236.30px;width:16.00px;height:1.50px;background:#d8382f;"></div>
<div class="t" style="left:1356.50px;top:247px;font-size:19.4px;color:#f6f6f6;font-weight:bold;transform:scaleX(0.9063);transform-origin:0 0;-webkit-text-stroke:.4px;">MEET THE CREW</div>
<div class="t" style="left:1364.00px;top:275px;font-size:6px;color:#6a6a6a;letter-spacing:0.498px;">The surfers and baristas behind every cup</div>
<div class="a" style="left:1422.50px;top:490.30px;width:15.00px;height:1.50px;background:#d8382f;"></div>
<div class="t" style="left:1323.50px;top:504px;font-size:18.6px;color:#f6f6f6;font-weight:bold;letter-spacing:-0.263px;-webkit-text-stroke:.4px;">COME FOR THE WAVES,</div>
<div class="t" style="left:1337.60px;top:523px;font-size:18.6px;color:#f6f6f6;font-weight:bold;transform:scaleX(0.9509);transform-origin:0 0;-webkit-text-stroke:.4px;">STAY FOR THE BREW</div>
<div class="t" style="left:1317.50px;top:555px;font-size:5.3px;color:#6a6a6a;letter-spacing:0.514px;">Whether you're catching your first wave or your fifth espresso, there's always a</div>
<div class="t" style="left:1362.00px;top:564px;font-size:5.3px;color:#6a6a6a;letter-spacing:0.466px;">seat and a story waiting for you at Swell &amp; Brew.</div>
<div class="a" style="left:1395.00px;top:582.40px;width:66.50px;height:17.60px;background:#f53d35;border-radius:1px;"></div>
<div class="t" style="left:1406.70px;top:589px;font-size:3.9px;color:#ffd5d0;font-weight:bold;letter-spacing:0.957px;">VISIT US TODAY</div>
<svg style="left:1452.9px;top:578.9px;filter:drop-shadow(0 1px 2px rgba(0,0,0,.45))" width="32.5" height="32.5" viewBox="-3 -3 32.5 32.5"><path d="M0 0L26.5 11.1L14.3 15.9L9.8 26.5Z" fill="#b060ee" stroke="#fff" stroke-width="2.500" stroke-linejoin="round"/></svg>
<div class="a" style="left:1477px;top:604.5px;width:64.5px;height:29px;background:#bd6ef2;border:1.500px solid #d39cf7;border-radius:2.500px;box-shadow:0 1.500px 3px rgba(0,0,0,.55)"></div>
<div class="t" style="left:1485.00px;top:611px;font-size:18.5px;color:#2a0a45;transform:scaleX(0.9271);transform-origin:0 0;-webkit-text-stroke:.3px;">Hex</div>
<div class="t" style="left:1522.30px;top:612px;font-size:9.5px;color:#2a0a45;font-weight:bold;-webkit-text-stroke:.3px;">AI</div>
<div class="a" style="left:1190px;top:182.500px;width:480.500px;height:451.500px;border:2px solid #3569b8"></div>
<div class="a" style="left:1187.5px;top:180.1px;width:7px;height:7px;background:#fff;border:1px solid #3569b8;box-shadow:0 0 1px #fff"></div>
<div class="a" style="left:1665.8px;top:180.1px;width:7px;height:7px;background:#fff;border:1px solid #3569b8;box-shadow:0 0 1px #fff"></div>
<div class="a" style="left:1187.5px;top:629.5px;width:7px;height:7px;background:#fff;border:1px solid #3569b8;box-shadow:0 0 1px #fff"></div>
<div class="a" style="left:1665.8px;top:629.5px;width:7px;height:7px;background:#fff;border:1px solid #3569b8;box-shadow:0 0 1px #fff"></div>
</div>
<!-- RIGHT PANEL -->
<div id="panel">
<svg style="left:1746.5px;top:122.5px" width="14" height="13" viewBox="0 0 14 13"><path class="ic" style="stroke:#a8a8a8;stroke-width:1.300" d="M1 1V12M4 2H12.500V5.500H4ZM4 8.500H9V11.500H4Z"/></svg>
<div class="t" style="left:1765.50px;top:124px;font-size:10.4px;color:#d2d2d2;font-family:'Liberation Mono',monospace;font-weight:bold;letter-spacing:0.239px;">Baristas Page</div>
<svg style="left:1914.5px;top:121.5px" width="14" height="14" viewBox="0 0 14 14"><rect class="ic" style="stroke:#a0a0a0;stroke-width:1.300" x="1" y="1" width="12" height="12" rx="1.800"/><path class="ic" style="stroke:#a0a0a0;stroke-width:1.300" d="M8.800 1V13"/></svg>
<svg style="left:1746px;top:152.5px" width="15" height="15" viewBox="0 0 15 15"><path class="ic" style="stroke:#a8a8a8;stroke-width:1.200" d="M7.500 1L14 7.500L7.500 14L1 7.500Z"/><path class="ic" style="stroke:#a8a8a8;stroke-width:1.100" d="M7.500 5.700V9.300M5.700 7.500H9.300"/></svg>
<div class="t" style="left:1765.50px;top:155px;font-size:10px;color:#d6d6d6;font-weight:bold;letter-spacing:-0.064px;">Create Component</div>
<div class="sep" style="top:180.5px"></div>
<div class="t" style="left:1745.80px;top:194px;font-size:11px;color:#b5b5b5;letter-spacing:0.348px;">Context</div>
<svg style="left:1916px;top:198px" width="11" height="7" viewBox="0 0 11 7"><path class="ic" style="stroke:#cfcfcf;stroke-width:1.500" d="M1.500 1.500L5.500 5.300L9.500 1.500"/></svg>
<div class="sep" style="top:221px"></div>
<div class="t" style="left:1744.00px;top:233px;font-size:11px;color:#b5b5b5;letter-spacing:0.385px;">Alignment</div>
<svg style="left:1747.6px;top:255.8px" width="14" height="14" viewBox="0 0 14 14"><path d="M1 0V14" fill="none" stroke="#505050" stroke-width="1.200"/><g fill="#505050"><rect x="3" y="2.500" width="8.500" height="3.400" rx=".6"/><rect x="3" y="8" width="5" height="3.400" rx=".6"/></g></svg>
<svg style="left:1780px;top:255.8px" width="14" height="14" viewBox="0 0 14 14"><path d="M7 0V14" fill="none" stroke="#505050" stroke-width="1.200"/><g fill="#505050"><rect x="2.500" y="2.500" width="9" height="3.400" rx=".6"/><rect x="4.200" y="8" width="5.600" height="3.400" rx=".6"/></g></svg>
<svg style="left:1813.5px;top:255.8px" width="14" height="14" viewBox="0 0 14 14"><path d="M13 0V14" fill="none" stroke="#505050" stroke-width="1.200"/><g fill="#505050"><rect x="2.500" y="2.500" width="8.500" height="3.400" rx=".6"/><rect x="6" y="8" width="5" height="3.400" rx=".6"/></g></svg>
<svg style="left:1847px;top:255.8px" width="14" height="14" viewBox="0 0 14 14"><path d="M0 1H14" fill="none" stroke="#505050" stroke-width="1.200"/><g fill="#505050"><rect x="2.500" y="3" width="3.400" height="9.500" rx=".6"/><rect x="8" y="3" width="3.400" height="5.500" rx=".6"/></g></svg>
<svg style="left:1881px;top:255.8px" width="14" height="14" viewBox="0 0 14 14"><path d="M0 7H14" fill="none" stroke="#505050" stroke-width="1.200"/><g fill="#505050"><rect x="2.500" y="2" width="3.400" height="10" rx=".6"/><rect x="8" y="4" width="3.400" height="6" rx=".6"/></g></svg>
<svg style="left:1914.4px;top:255.8px" width="14" height="14" viewBox="0 0 14 14"><path d="M0 13H14" fill="none" stroke="#505050" stroke-width="1.200"/><g fill="#505050"><rect x="2.500" y="1" width="3.400" height="10" rx=".6"/><rect x="8" y="5" width="3.400" height="6" rx=".6"/></g></svg>
<div class="sep" style="top:283px"></div>
<div class="t" style="left:1744.00px;top:296px;font-size:11px;color:#b5b5b5;letter-spacing:0.695px;">Position</div>
<div class="inp" style="left:1743.7px;top:315.4px;width:91.5px;height:23px"></div>
<div class="inp" style="left:1841px;top:315.4px;width:90px;height:23px"></div>
<div class="inp" style="left:1743.7px;top:345px;width:91.5px;height:23px"></div>
<div class="t" style="left:1752.80px;top:322px;font-size:10.5px;color:#606060;">X</div>
<div class="t" style="left:1763.50px;top:323px;font-size:10.2px;color:#cfcfcf;font-family:'Liberation Mono',monospace;font-weight:bold;letter-spacing:0.339px;">3200</div>
<div class="t" style="left:1849.20px;top:322px;font-size:10.5px;color:#606060;">Y</div>
<div class="t" style="left:1860.30px;top:323px;font-size:10.2px;color:#cfcfcf;font-family:'Liberation Mono',monospace;font-weight:bold;">0</div>
<div class="t" style="left:1752.50px;top:351px;font-size:10.5px;color:#606060;">R</div>
<div class="t" style="left:1763.50px;top:352px;font-size:10.2px;color:#cfcfcf;font-family:'Liberation Mono',monospace;font-weight:bold;">0°</div>
<div class="sep" style="top:377.4px"></div>
<div class="t" style="left:1744.00px;top:391px;font-size:11px;color:#b5b5b5;letter-spacing:0.214px;">Flex Layout</div>
<svg style="left:1917px;top:390.5px" width="13" height="13" viewBox="0 0 13 13"><path class="ic" style="stroke:#9a9a9a;stroke-width:1.300" d="M2.200 1H5V12H2.200A1.200 1.200 0 0 1 1 10.800V2.200A1.200 1.200 0 0 1 2.200 1ZM7.500 1H10.800A1.200 1.200 0 0 1 12 2.200V6.500H7.500ZM9 9.200q1.800 2.600 3.400-.4"/></svg>
<div class="inp" style="left:1743.7px;top:411.3px;width:187.3px;height:21px"></div>
<div class="a" style="left:1808.40px;top:411.30px;width:59.00px;height:21.00px;background:#57575f;border-radius:5px;"></div>
<svg style="left:1767.5px;top:414.5px" width="14" height="14" viewBox="0 0 14 14"><g class="ic" style="stroke:#5a5a5a;stroke-width:1.200"><rect x="1" y="1" width="4.600" height="4.600" rx="1"/><rect x="8.400" y="1" width="4.600" height="4.600" rx="1"/><rect x="1" y="8.400" width="4.600" height="4.600" rx="1"/><rect x="8.400" y="8.400" width="4.600" height="4.600" rx="1"/></g></svg>
<svg style="left:1831px;top:415px" width="14" height="14" viewBox="0 0 14 14"><path class="ic" style="stroke:#c8c8c8;stroke-width:1.200" d="M1.500 1H12.500M7 3.500V12.500M3.800 9.400L7 12.600L10.200 9.400"/></svg>
<svg style="left:1893.5px;top:415px" width="14" height="14" viewBox="0 0 14 14"><path class="ic" style="stroke:#6a6a6a;stroke-width:1.200" d="M1 1.500V12.500M3.500 7H12.500M9.400 3.800L12.600 7L9.400 10.200"/></svg>
<div class="t" style="left:1744.00px;top:443px;font-size:9px;color:#8c8c8c;letter-spacing:0.247px;">Alignment</div>
<div class="t" style="left:1840.00px;top:443px;font-size:9px;color:#8c8c8c;transform:scaleX(0.9405);transform-origin:0 0;">Gap</div>
<div class="a" style="left:1743.70px;top:457.00px;width:91.50px;height:67.40px;background:#3f3e47;border-radius:4px;"></div>
<div class="a" style="left:1752.20px;top:462.90px;width:9.00px;height:9.00px;background:#3d8ff5;border-radius:2px;"></div>
<div class="a" style="left:1786.70px;top:466.40px;width:2.40px;height:2.00px;background:#9c9ca6;border-radius:1px;"></div>
<div class="a" style="left:1818.40px;top:466.40px;width:2.40px;height:2.00px;background:#9c9ca6;border-radius:1px;"></div>
<div class="a" style="left:1755.50px;top:490.00px;width:2.40px;height:2.00px;background:#9c9ca6;border-radius:1px;"></div>
<div class="a" style="left:1786.70px;top:490.00px;width:2.40px;height:2.00px;background:#9c9ca6;border-radius:1px;"></div>
<div class="a" style="left:1818.40px;top:490.00px;width:2.40px;height:2.00px;background:#9c9ca6;border-radius:1px;"></div>
<div class="a" style="left:1755.50px;top:513.70px;width:2.40px;height:2.00px;background:#9c9ca6;border-radius:1px;"></div>
<div class="a" style="left:1786.70px;top:513.70px;width:2.40px;height:2.00px;background:#9c9ca6;border-radius:1px;"></div>
<div class="a" style="left:1818.40px;top:513.70px;width:2.40px;height:2.00px;background:#9c9ca6;border-radius:1px;"></div>
<div class="a" style="left:1840.200px;top:462.700px;width:13px;height:13px;border-radius:50%;background:#1d64d8;border:2.800px solid #f4f4f4;box-shadow:0 0 0 .6px #1d64d8 inset"></div>
<div class="inp" style="left:1858px;top:457.7px;width:73px;height:23px"></div>
<svg style="left:1864px;top:464px" width="10" height="10" viewBox="0 0 10 10"><path class="ic" style="stroke:#5a5a5a;stroke-width:1.100" d="M5 .500V9.500M2.800 3L.800 5L2.800 7M7.200 3L9.200 5L7.200 7"/></svg>
<div class="t" style="left:1880.80px;top:465px;font-size:10.2px;color:#cfcfcf;font-family:'Liberation Mono',monospace;font-weight:bold;">0</div>
<div class="a" style="left:1840.40px;top:486.50px;width:12.60px;height:12.60px;background:#fafafa;border-radius:7px;"></div>
<div class="t" style="left:1857.40px;top:489px;font-size:9px;color:#b8b8b8;font-weight:bold;letter-spacing:-0.069px;">Space Between</div>
<div class="a" style="left:1840.40px;top:510.10px;width:12.60px;height:12.60px;background:#fafafa;border-radius:7px;"></div>
<div class="t" style="left:1857.40px;top:513px;font-size:9px;color:#b8b8b8;font-weight:bold;letter-spacing:-0.107px;">Space Around</div>
<div class="t" style="left:1744.00px;top:540px;font-size:9px;color:#8c8c8c;letter-spacing:0.162px;">Padding</div>
<svg style="left:1917px;top:537.5px" width="14" height="14" viewBox="0 0 14 14"><path class="ic" style="stroke:#9a9a9a;stroke-width:1.200" d="M7 1L12.200 4V10L7 13L1.800 10V4Z"/><circle class="ic" style="stroke:#9a9a9a;stroke-width:1.200" cx="7" cy="7" r="2"/></svg>
<div class="inp" style="left:1743.7px;top:556px;width:91.5px;height:23px"></div>
<div class="inp" style="left:1841px;top:556px;width:90px;height:23px"></div>
<svg style="left:1750.5px;top:562.5px" width="10" height="10" viewBox="0 0 10 10"><path class="ic" style="stroke:#5a5a5a;stroke-width:1.100" d="M.500 1H9.500M.500 9H9.500M2.500 3.500H7.500V6.500H2.500Z"/></svg>
<div class="t" style="left:1767.00px;top:563px;font-size:10.2px;color:#cfcfcf;font-family:'Liberation Mono',monospace;font-weight:bold;">0</div>
<svg style="left:1847.5px;top:562.5px" width="10" height="10" viewBox="0 0 10 10"><path class="ic" style="stroke:#5a5a5a;stroke-width:1.100" d="M1 .500V9.500M9 .500V9.500M3.500 2.500H6.500V7.500H3.500Z"/></svg>
<div class="t" style="left:1863.80px;top:563px;font-size:10.2px;color:#cfcfcf;font-family:'Liberation Mono',monospace;font-weight:bold;">0</div>
<div class="t" style="left:1744.00px;top:590px;font-size:9px;color:#8c8c8c;letter-spacing:0.109px;">Dimensions</div>
<div class="inp" style="left:1743.7px;top:604.7px;width:91.5px;height:23px"></div>
<div class="inp" style="left:1841px;top:604.7px;width:90px;height:23px"></div>
<div class="t" style="left:1750.50px;top:611px;font-size:10.5px;color:#606060;">W</div>
<div class="t" style="left:1764.40px;top:612px;font-size:10.2px;color:#cfcfcf;font-family:'Liberation Mono',monospace;font-weight:bold;letter-spacing:0.339px;">1440</div>
<div class="t" style="left:1848.30px;top:611px;font-size:10.5px;color:#606060;">H</div>
<div class="t" style="left:1861.00px;top:612px;font-size:10.2px;color:#cfcfcf;font-family:'Liberation Mono',monospace;font-weight:bold;letter-spacing:0.339px;">1354</div>
<div class="a" style="left:1743.7px;top:635.7px;width:16px;height:16px;border-radius:3.500px;background:#1d1d1f;border:1px solid #303032"></div>
<div class="t" style="left:1763.50px;top:640px;font-size:9px;color:#b8b8b8;font-weight:bold;letter-spacing:-0.045px;">Fill Width</div>
<div class="a" style="left:1841px;top:635.7px;width:16px;height:16px;border-radius:3.500px;background:#1d1d1f;border:1px solid #303032"></div>
<div class="t" style="left:1860.00px;top:640px;font-size:9px;color:#b8b8b8;font-weight:bold;letter-spacing:-0.050px;">Fill Height</div>
<div class="a" style="left:1743.7px;top:659.3px;width:16px;height:16px;border-radius:3.500px;background:#1d1d1f;border:1px solid #303032"></div>
<div class="t" style="left:1763.50px;top:663px;font-size:9px;color:#b8b8b8;font-weight:bold;letter-spacing:0.074px;">Hug Width</div>
<div class="a" style="left:1841px;top:659.3px;width:16px;height:16px;border-radius:3.500px;background:#8e8e8e;border:1px solid #a5a5a5"></div>
<svg style="left:1844px;top:662.8px" width="10" height="9" viewBox="0 0 10 9"><path d="M1.500 4.800L4 7.300L8.500 1.800" fill="none" stroke="#2a2a2a" stroke-width="1.600" stroke-linecap="round" stroke-linejoin="round"/></svg>
<div class="t" style="left:1860.00px;top:663px;font-size:9px;color:#b8b8b8;font-weight:bold;letter-spacing:0.056px;">Hug Height</div>
<div class="a" style="left:1743.7px;top:680.9px;width:16px;height:16px;border-radius:3.500px;background:#1d1d1f;border:1px solid #303032"></div>
<div class="t" style="left:1763.50px;top:685px;font-size:9px;color:#b8b8b8;font-weight:bold;letter-spacing:-0.090px;">Clip Content</div>
<div class="sep" style="top:706.8px"></div>
<div class="t" style="left:1744.00px;top:720px;font-size:11px;color:#b5b5b5;letter-spacing:0.353px;">Appearance</div>
<div class="inp" style="left:1743.7px;top:740.2px;width:77px;height:22.2px"></div>
<div class="inp" style="left:1827px;top:740.2px;width:77px;height:22.2px"></div>
<div class="t" style="left:1750.50px;top:747px;font-size:10px;color:#606060;">%</div>
<div class="t" style="left:1764.00px;top:747px;font-size:10.2px;color:#cfcfcf;font-family:'Liberation Mono',monospace;font-weight:bold;letter-spacing:0.319px;">100</div>
<svg style="left:1832.5px;top:745.5px" width="12" height="12" viewBox="0 0 12 12"><path class="ic" style="stroke:#6a6a6a;stroke-width:1.300" d="M1 3.500V2.500A1.500 1.500 0 0 1 2.500 1H3.500M8.500 1H9.500A1.500 1.500 0 0 1 11 2.500V3.500M11 8.500V9.500A1.500 1.500 0 0 1 9.500 11H8.500M3.500 11H2.500A1.500 1.500 0 0 1 1 9.500V8.500"/></svg>
<div class="t" style="left:1850.50px;top:747px;font-size:10.2px;color:#cfcfcf;font-family:'Liberation Mono',monospace;font-weight:bold;">0</div>
<svg style="left:1914px;top:744.8px" width="13" height="13" viewBox="0 0 13 13"><path class="ic" style="stroke:#808080;stroke-width:1.300" d="M1 4V2.500A1.500 1.500 0 0 1 2.500 1H4M9 1H10.500A1.500 1.500 0 0 1 12 2.500V4M12 9V10.500A1.500 1.500 0 0 1 10.500 12H9M4 12H2.500A1.500 1.500 0 0 1 1 10.500V9"/></svg>
<div class="sep" style="top:774px"></div>
<div class="t" style="left:1744.00px;top:790px;font-size:11px;color:#b5b5b5;letter-spacing:-0.017px;">Fill</div>
<svg style="left:1916px;top:790.3px" width="9" height="9" viewBox="0 0 9 9"><path class="ic" style="stroke:#7c7c7c;stroke-width:1.200" d="M4.500 .500V8.500M.500 4.500H8.500"/></svg>
<div class="inp" style="left:1743.7px;top:811.6px;width:141.7px;height:23px"></div>
<div class="a" style="left:1748.700px;top:816px;width:14.500px;height:14.500px;border-radius:3px;background:#09090a;border:1px solid #2c2c2e"></div>
<div class="t" style="left:1768.50px;top:819px;font-size:10.4px;color:#cfcfcf;font-weight:bold;letter-spacing:0.286px;">swiss-bg</div>
<svg style="left:1869.5px;top:817.5px" width="11" height="11" viewBox="0 0 11 11"><path class="ic" style="stroke:#4c3a6c;stroke-width:1.100" d="M5.500 .800L10.200 5.500L5.500 10.200L.800 5.500Z"/><circle cx="5.500" cy="5.500" r="1.100" fill="#4c3a6c"/></svg>
<svg style="left:1890.5px;top:817.5px" width="15" height="11" viewBox="0 0 15 11"><path class="ic" style="stroke:#747474;stroke-width:1.200" d="M1 5.500Q7.500-2.500 14 5.500Q7.500 13.500 1 5.500Z"/><circle class="ic" style="stroke:#747474;stroke-width:1.200" cx="7.500" cy="5.500" r="2"/></svg>
<div class="a" style="left:1915.00px;top:822.60px;width:9.50px;height:1.30px;background:#7c7c7c;"></div>
<div class="sep" style="top:845px"></div>
<div class="t" style="left:1744.00px;top:861px;font-size:11px;color:#b5b5b5;letter-spacing:0.241px;">Stroke</div>
<svg style="left:1916px;top:862.1px" width="9" height="9" viewBox="0 0 9 9"><path class="ic" style="stroke:#7c7c7c;stroke-width:1.200" d="M4.500 .500V8.500M.500 4.500H8.500"/></svg>
<div class="sep" style="top:887.2px"></div>
<div class="t" style="left:1744.00px;top:904px;font-size:11px;color:#b5b5b5;letter-spacing:0.429px;">Effects</div>
<svg style="left:1916px;top:904.5px" width="9" height="9" viewBox="0 0 9 9"><path class="ic" style="stroke:#7c7c7c;stroke-width:1.200" d="M4.500 .500V8.500M.500 4.500H8.500"/></svg>
<div class="sep" style="top:929px"></div>
<div class="t" style="left:1744.00px;top:943px;font-size:11px;color:#b5b5b5;letter-spacing:0.441px;">Export</div>
<div class="a" style="left:1743.7px;top:962.200px;width:91.5px;height:23px;border-radius:5px;background:#141414;border:1px solid #343436"></div>
<div class="t" style="left:1752.70px;top:969px;font-size:10.5px;color:#cfcfcf;letter-spacing:1.410px;">2x</div>
<svg style="left:1816.7px;top:970.5px" width="10" height="7" viewBox="0 0 10 7"><path class="ic" style="stroke:#8a8a8a;stroke-width:1.300" d="M1.200 1.500L5 5L8.800 1.500"/></svg>
<div class="a" style="left:1841px;top:962.200px;width:90px;height:23px;border-radius:5px;background:#141414;border:1px solid #343436"></div>
<div class="t" style="left:1850.00px;top:969px;font-size:10.5px;color:#cfcfcf;letter-spacing:0.123px;">PNG</div>
<svg style="left:1912.5px;top:970.5px" width="10" height="7" viewBox="0 0 10 7"><path class="ic" style="stroke:#8a8a8a;stroke-width:1.300" d="M1.200 1.500L5 5L8.800 1.500"/></svg>
<div class="a" style="left:1743.70px;top:992.60px;width:187.30px;height:22.20px;background:#28282a;border-radius:5px;"></div>
<div class="t" style="left:1806.30px;top:999px;font-size:10.4px;color:#d6d6d6;font-weight:bold;letter-spacing:0.171px;">Export layer</div>
<div class="sep" style="top:1024.5px"></div>
</div>
<!-- BOTTOM -->
<div id="bottom">
<div class="a" style="left:62px;top:1091.400px;width:296px;height:34px;border-radius:9px;background:#151515;border:1.400px solid #303030"></div>
<svg style="left:73px;top:1105.5px" width="10" height="7" viewBox="0 0 10 7"><path class="ic" style="stroke:#767676;stroke-width:1.300" d="M1.200 5.500L5 2L8.800 5.500"/></svg>
<div class="t" style="left:91.70px;top:1103px;font-size:12.4px;color:#8c8c8c;letter-spacing:0.537px;">Design with Claude or Codex...</div>
<svg style="left:290.5px;top:1100.5px" width="14" height="16" viewBox="0 0 14 16"><path d="M9 .500L1.500 9H6.300L4.800 15.500L12.500 7H7.500Z" fill="#f5b21e"/></svg>
<div class="t" style="left:305.50px;top:1104px;font-size:9.6px;color:#d99a1c;font-weight:bold;letter-spacing:-0.178px;">6x</div>
<div class="a" style="left:327.00px;top:1098.50px;width:20.00px;height:20.00px;background:#6c6a7c;border-radius:10px;"></div>
<svg style="left:331.5px;top:1103px" width="11" height="11" viewBox="0 0 11 11"><path class="ic" style="stroke:#4a4858;stroke-width:1.400" d="M5.500 9.800V1.500M1.800 5.200L5.500 1.500L9.200 5.200"/></svg>
<div class="a" style="left:1616.00px;top:1092.00px;width:108.50px;height:29.50px;background:#171717;border-radius:7px;"></div>
<div class="a" style="left:1626.00px;top:1106.40px;width:10.00px;height:1.30px;background:#9a9a9a;"></div>
<div class="t" style="left:1660.00px;top:1102px;font-size:10.6px;color:#eaeaea;font-weight:bold;letter-spacing:-0.108px;">34%</div>
<svg style="left:1704px;top:1102px" width="10" height="10" viewBox="0 0 10 10"><path class="ic" style="stroke:#9a9a9a;stroke-width:1.300" d="M5 .500V9.500M.500 5H9.500"/></svg>
</div>
</div><!--all-->
</body>
</html>
